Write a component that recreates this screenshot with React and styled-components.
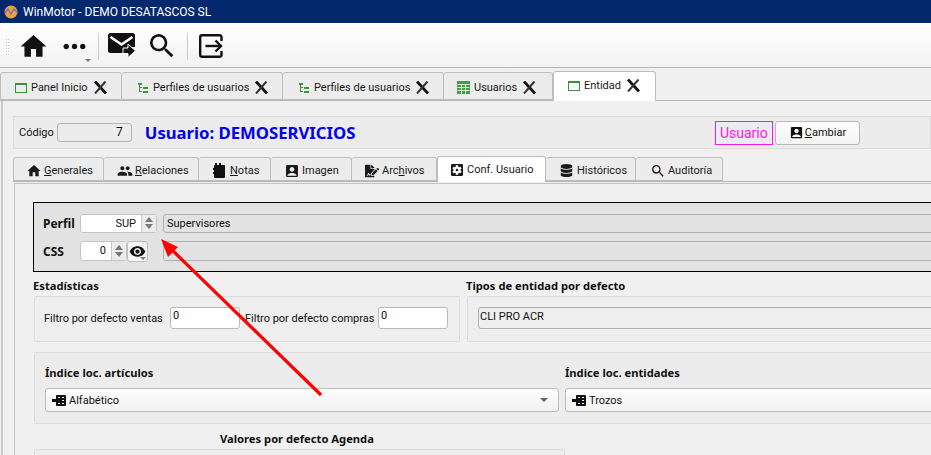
import React from "react"
import styled, { createGlobalStyle } from "styled-components"
import { MdHome, MdPeople, MdAccountBox, MdSearch, MdSettingsApplications, MdVisibility, MdMoreHoriz } from "react-icons/md"
import { FaDatabase, FaFileSignature } from "react-icons/fa"

const Global = createGlobalStyle`
  html, body { margin: 0; padding: 0; background: #f0f0f0; }
  body { font-family: Roboto, "Noto Sans", sans-serif; font-size: 11px; color: #111; }
`
const Window = styled.div`
  position: relative;
  width: 931px;
  height: 455px;
  overflow: hidden;
  background: #f0f0f0;
`
const TitleBar = styled.div`
  height: 23px;
  background: #03286e;
  color: #fff;
  display: flex;
  align-items: center;
  gap: 5px;
  padding-left: 4px;
  font-size: 12px;
`
const Toolbar = styled.div`
  height: 45px;
  box-sizing: border-box;
  border-bottom: 1px solid #b8b8b8;
  background: linear-gradient(#ffffff, #f2f2f2);
  display: flex;
  align-items: center;
  padding: 2px 0 0 5px;
`
const Grip = styled.div`
  width: 5px;
  height: 17px;
  margin-right: 9px;
  background-image: radial-gradient(#bbb 0.7px, transparent 0.8px);
  background-size: 2.5px 3px;
`
const ToolButton = styled.div`
  width: ${p => p.$w}px;
  height: 32px;
  flex: none;
  display: flex;
  align-items: center;
  justify-content: center;
  position: relative;
  margin-right: ${p => p.$mr || 0}px;
  svg { flex: none; }
`
const Caret = styled.span`
  position: absolute;
  right: ${p => p.$r || 0}px;
  bottom: ${p => p.$b || 0}px;
  border: 3px solid transparent;
  border-top: 3px solid #777;
  border-bottom: 0;
`
const ToolSep = styled.div`
  width: 1px;
  height: 27px;
  background: #ccc;
  margin: 0 ${p => p.$mr}px 0 ${p => p.$ml}px;
`
const TabBar = styled.div`
  display: flex;
  align-items: flex-end;
  height: ${p => p.$h}px;
  border-bottom: 1px solid #b5b5b5;
`
const Tab = styled.div`
  box-sizing: border-box;
  width: ${p => p.$w}px;
  height: ${p => (p.$active ? p.$h + 2 : p.$h)}px;
  margin-bottom: ${p => (p.$active ? -1 : 0)}px;
  background: ${p => (p.$active ? "#fff" : "#ececec")};
  border: 1px solid #bdbdbd;
  border-bottom: ${p => (p.$active ? "none" : "1px solid #bdbdbd")};
  border-left: ${p => (p.$first || p.$active ? "1px solid #bdbdbd" : "none")};
  border-radius: 3px 3px 0 0;
  display: flex;
  align-items: center;
  gap: 4px;
  padding-left: ${p => p.$pl}px;
  padding-top: ${p => (p.$active ? 0 : 3)}px;
  padding-bottom: ${p => (p.$active ? p.$ab : 0)}px;
  white-space: nowrap;
  color: #1a1a1a;
`
const TabIcon = styled.span`
  width: 13px;
  flex: none;
  display: flex;
  align-items: center;
  justify-content: center;
  svg { flex: none; }
`
const CloseBox = styled.span`
  display: flex;
  margin-left: 2px;
`
const Key = styled.span`
  text-decoration: underline;
`
const Page = styled.div`
  padding: 15px 0 0 10px;
  border-left: 2px solid #c9c9c9;
  margin-left: 1px;
  width: 1100px;
`
const Header = styled.div`
  height: 33px;
  box-sizing: border-box;
  border: 1px solid #dcdcdc;
  background: #ececec;
  display: flex;
  align-items: center;
  padding-left: 5px;
  width: 918px;
`
const Plain = styled.span`
  font-size: 11px;
  white-space: nowrap;
  width: ${p => (p.$w ? `${p.$w}px` : "auto")};
`
const ReadOnly = styled.div`
  width: 75px;
  height: 19px;
  box-sizing: border-box;
  margin-left: 3px;
  border: 1px solid #b4b4b4;
  border-radius: 3px;
  background: #ececec;
  text-align: right;
  padding-right: 8px;
  line-height: 17px;
  font-size: 12px;
`
const Title = styled.div`
  color: #0000f0;
  font-family: "Noto Sans", sans-serif;
  font-weight: bold;
  font-size: 16.7px;
  margin-left: 13px;
  width: 570px;
  white-space: nowrap;
`
const Badge = styled.div`
  box-sizing: border-box;
  width: 58px;
  height: 24px;
  border: 1px solid #ff14f0;
  color: #ff14f0;
  font-size: 14px;
  display: flex;
  align-items: center;
  justify-content: center;
`
const Button = styled.div`
  box-sizing: border-box;
  width: 85px;
  height: 24px;
  margin-left: 2px;
  border: 1px solid #b9b9b9;
  border-radius: 3px;
  background: linear-gradient(#fdfdfd, #f3f3f3);
  display: flex;
  align-items: center;
  gap: 1px;
  padding-left: 13px;
`
const SubTabs = styled.div`
  margin-top: 7px;
`
const Pane = styled.div`
  border-left: 1px solid #c4c4c4;
  border-top: 1px solid #c4c4c4;
  margin-top: 1px;
  margin-left: 1px;
  padding: 18px 0 0 18px;
  height: 300px;
`
const ProfileBox = styled.div`
  box-sizing: border-box;
  height: 70px;
  border: 1px solid #000;
  background: #e2e2e2;
  padding: 10px 0 0 9px;
  display: flex;
  flex-direction: column;
  gap: 8px;
`
const ProfileRow = styled.div`
  display: flex;
  align-items: center;
  height: 20px;
`
const ProfileLabel = styled.div`
  width: 37px;
  font-family: "Noto Sans", sans-serif;
  font-weight: bold;
  font-size: 12px;
`
const Spin = styled.div`
  box-sizing: border-box;
  width: ${p => p.$w}px;
  height: ${p => p.$h || 19}px;
  display: flex;
  border: 1px solid #c4c4c4;
  border-radius: 3px;
  background: #fff;
`
const SpinValue = styled.div`
  flex: 1;
  text-align: right;
  padding-right: 5px;
  line-height: 18px;
  font-size: 11px;
`
const SpinArrows = styled.div`
  width: 14px;
  background: #ececec;
  border-left: 1px solid #c9c9c9;
  display: flex;
  flex-direction: column;
  align-items: center;
  justify-content: center;
  gap: 2px;
`
const Up = styled.span`
  border: 4px solid transparent;
  border-top: 0;
  border-bottom: 5px solid #777;
`
const Down = styled.span`
  border: 4px solid transparent;
  border-bottom: 0;
  border-top: 5px solid #777;
`
const EyeButton = styled.div`
  box-sizing: border-box;
  width: 21px;
  height: 21px;
  border: 1px solid #bdbdbd;
  border-radius: 3px;
  background: #f4f4f4;
  display: flex;
  align-items: center;
  justify-content: center;
  position: relative;
`
const GreyField = styled.div`
  box-sizing: border-box;
  width: 800px;
  height: ${p => p.$h || 19}px;
  margin-left: ${p => p.$ml}px;
  border: 1px solid #b0b0b0;
  border-radius: 3px;
  background: #e2e2e2;
  padding-left: 3px;
  line-height: 17px;
`
const TwoCols = styled.div`
  display: grid;
  grid-template-columns: 427px 600px;
  column-gap: 6px;
  margin-top: 8px;
`
const GroupTitle = styled.div`
  font-family: "Noto Sans", sans-serif;
  font-weight: bold;
  font-size: 11.2px;
  height: 16px;
  line-height: 12px;
  margin-left: ${p => p.$ml || 0}px;
  white-space: nowrap;
`
const Group = styled.div`
  box-sizing: border-box;
  height: ${p => p.$h}px;
  width: ${p => p.$w || "auto"};
  margin-left: 1px;
  border: 1px solid #dcdcdc;
  border-radius: 2px;
  background: #eeeeee;
`
const FilterGroup = styled(Group)`
  display: flex;
  align-items: center;
  padding: 0 0 2px 9px;
`
const NumInput = styled.div`
  box-sizing: border-box;
  width: 70px;
  height: 22px;
  margin-right: 5px;
  border: 1px solid #b9b9b9;
  border-radius: 3px;
  background: #fff;
  padding: 0 2px;
  line-height: 15px;
`
const TypesGroup = styled(Group)`
  padding: 10px 0 0 10px;
`
const TypesField = styled.div`
  box-sizing: border-box;
  height: 22px;
  width: 560px;
  border: 1px solid #b0b0b0;
  border-radius: 3px;
  background: #eeeeee;
  padding-left: 1px;
  line-height: 17px;
`
const IndexGroup = styled(Group)`
  margin-top: 10px;
  display: grid;
  grid-template-columns: 514px 520px;
  column-gap: 6px;
  padding: 12px 0 0 10px;
  background: #ececec;
`
const ComboTitle = styled(GroupTitle)`
  height: 23px;
  line-height: 16px;
`
const Combo = styled.div`
  box-sizing: border-box;
  height: 24px;
  border: 1px solid #bdbdbd;
  border-radius: 3px;
  background: linear-gradient(#fdfdfd, #f1f1f1);
  display: flex;
  align-items: center;
  gap: 3px;
  padding: 0 10px 0 6px;
`
const ComboCaret = styled.span`
  margin-left: auto;
  border: 4px solid transparent;
  border-bottom: 0;
  border-top: 4px solid #666;
`
const AgendaTitle = styled(GroupTitle)`
  margin: 8px 0 0 187px;
  height: 17px;
  line-height: 14px;
`
const Overlay = styled.svg`
  position: absolute;
  left: 0;
  top: 0;
  pointer-events: none;
`

const Logo = () => (
  <svg width="14" height="14" viewBox="0 0 14 14">
    <circle cx="7" cy="7" r="6.5" fill="#e8a33a" />
    <path d="M1 8 L4 4 L7 9 L10 4 L13 7" fill="none" stroke="#7a6bc0" strokeWidth="1.3" />
  </svg>
)
const MailIcon = () => (
  <svg width="28" height="26" viewBox="0 0 28 26">
    <path d="M2.5 0 H24.5 a2.5 2.5 0 0 1 2.5 2.5 V14 H19 V20 H2.5 a2.5 2.5 0 0 1 -2.5 -2.5 V2.5 a2.5 2.5 0 0 1 2.5 -2.5 Z" fill="#111" />
    <path d="M2.5 4 L13.5 11.5 L24.5 4" fill="none" stroke="#fff" strokeWidth="2.6" />
    <path d="M15 15 H20 V11 L27.5 17.8 L20 24.5 V20.5 H15 Z" fill="#111" stroke="#fff" strokeWidth="1" />
  </svg>
)
const ExitIcon = () => (
  <svg width="24" height="24" viewBox="0 0 24 24" fill="none" stroke="#111" strokeWidth="2.4">
    <path d="M22.5 7 V3 a1.8 1.8 0 0 0 -1.8 -1.8 H3 a1.8 1.8 0 0 0 -1.8 1.8 V21 a1.8 1.8 0 0 0 1.8 1.8 H20.7 a1.8 1.8 0 0 0 1.8 -1.8 V17" />
    <path d="M6.5 12 H22" />
    <path d="M16.5 6.5 L22 12 L16.5 17.5" />
  </svg>
)
const Cross = () => (
  <svg width="13" height="13" viewBox="0 0 13 13">
    <path d="M1 0.5 L12 12.5" stroke="#111" strokeWidth="2.8" />
    <path d="M11.5 0.5 L1 12.5" stroke="#333" strokeWidth="2" />
  </svg>
)
const WindowIcon = () => (
  <svg width="12" height="12" viewBox="0 0 12 12" fill="none" stroke="#3c8f3c">
    <rect x="0.5" y="1.5" width="11" height="9" />
    <path d="M0.5 2.5 H11.5" />
  </svg>
)
const TreeIcon = () => (
  <svg width="12" height="12" viewBox="0 0 12 12" fill="#3c9a3c">
    <rect x="1" y="1" width="4" height="2" />
    <rect x="2" y="3" width="1" height="7" />
    <rect x="3" y="5" width="2" height="1" />
    <rect x="3" y="9" width="2" height="1" />
    <rect x="6" y="5" width="5" height="2" />
    <rect x="6" y="9" width="5" height="2" />
  </svg>
)
const GridIcon = () => (
  <svg width="13" height="13" viewBox="0 0 13 13">
    <rect x="0" y="0" width="13" height="13" fill="#4c9a4c" />
    <path d="M0.5 3.5 H12.5 M0.5 6.5 H12.5 M0.5 9.5 H12.5 M4.5 3 V13 M8.5 3 V13" stroke="#d6ecd6" />
  </svg>
)
const NotebookIcon = () => (
  <svg width="13" height="15" viewBox="0 0 13 15" fill="#111">
    <rect x="1" y="2" width="11" height="13" rx="1" />
    <rect x="2" y="0" width="2" height="4" />
    <rect x="6" y="0" width="2" height="4" />
    <rect x="0" y="5" width="1.5" height="2" />
    <rect x="0" y="9" width="1.5" height="2" />
  </svg>
)
const NodeIcon = () => (
  <svg width="14" height="11" viewBox="0 0 14 11">
    <rect x="4" y="0" width="10" height="11" rx="1" fill="#111" />
    <rect x="0" y="4" width="6" height="3" fill="#111" />
    <path d="M6 2.5 H8 M10 2.5 H12 M10 5.5 H12 M6 8.5 H8 M10 8.5 H12" stroke="#fff" />
  </svg>
)

const topTabs = [
  { label: "Panel Inicio", w: 122, icon: <WindowIcon />, pl: 13 },
  { label: "Perfiles de usuarios", w: 161, icon: <TreeIcon />, pl: 14 },
  { label: "Perfiles de usuarios", w: 161, icon: <TreeIcon />, pl: 14 },
  { label: "Usuarios", w: 109, icon: <GridIcon />, pl: 13 },
  { label: "Entidad", w: 103, icon: <WindowIcon />, pl: 13, active: true },
]
const subTabs = [
  { pre: "", key_: "G", post: "enerales", w: 91, pl: 13, icon: <MdHome size={16} /> },
  { pre: "", key_: "R", post: "elaciones", w: 95, pl: 14, icon: <MdPeople size={16} /> },
  { pre: "", key_: "N", post: "otas", w: 72, pl: 14, icon: <NotebookIcon /> },
  { pre: "Imagen", key_: "", post: "", w: 81, pl: 14, icon: <MdAccountBox size={16} /> },
  { pre: "Arc", key_: "h", post: "ivos", w: 85, pl: 13, icon: <FaFileSignature size={14} /> },
  { pre: "Conf. Usuario", key_: "", post: "", w: 109, pl: 12, icon: <MdSettingsApplications size={16} />, active: true },
  { pre: "Históricos", key_: "", post: "", w: 90, pl: 14, icon: <FaDatabase size={13} /> },
  { pre: "Auditoría", key_: "", post: "", w: 87, pl: 15, icon: <MdSearch size={16} /> },
]

const App = () => {
  return (
    <Window>
      <Global />
      <TitleBar><Logo />WinMotor - DEMO DESATASCOS SL</TitleBar>
      <Toolbar>
        <Grip />
        <ToolButton $w={28} $mr={7}><MdHome size={31} /></ToolButton>
        <ToolButton $w={40}><MdMoreHoriz size={33} /><Caret $r={3} /></ToolButton>
        <ToolSep $ml={4} $mr={9} />
        <ToolButton $w={27} $mr={15}><MailIcon /></ToolButton>
        <ToolButton $w={24}><MdSearch size={32} /></ToolButton>
        <ToolSep $ml={13} $mr={11} />
        <ToolButton $w={24}><ExitIcon /></ToolButton>
      </Toolbar>
      <TabBar $h={32}>
        {topTabs.map((t, i) => (
          <Tab key={i} $w={t.w} $h={28} $pl={t.pl} $ab={2} $active={t.active} $first={i === 0}>
            <TabIcon>{t.icon}</TabIcon>{t.label}<CloseBox><Cross /></CloseBox>
          </Tab>
        ))}
      </TabBar>
      <Page>
        <Header>
          <Plain>Código</Plain>
          <ReadOnly>7</ReadOnly>
          <Title>Usuario: DEMOSERVICIOS</Title>
          <Badge>Usuario</Badge>
          <Button><MdAccountBox size={15} /><span><Key>C</Key>ambiar</span></Button>
        </Header>
        <SubTabs>
          <TabBar $h={25}>
            {subTabs.map((t, i) => (
              <Tab key={i} $w={t.w} $h={24} $pl={t.pl} $ab={0} $active={t.active} $first={i === 0}>
                <TabIcon>{t.icon}</TabIcon><span>{t.pre}{t.key_ && <Key>{t.key_}</Key>}{t.post}</span>
              </Tab>
            ))}
          </TabBar>
        </SubTabs>
        <Pane>
          <ProfileBox>
            <ProfileRow>
              <ProfileLabel>Perfil</ProfileLabel>
              <Spin $w={77}><SpinValue>SUP</SpinValue><SpinArrows><Up /><Down /></SpinArrows></Spin>
              <GreyField $ml={6}>Supervisores</GreyField>
            </ProfileRow>
            <ProfileRow>
              <ProfileLabel>CSS</ProfileLabel>
              <Spin $w={47} $h={20}><SpinValue>0</SpinValue><SpinArrows><Up /><Down /></SpinArrows></Spin>
              <EyeButton><MdVisibility size={17} /><Caret $r={1} $b={1} /></EyeButton>
              <GreyField $ml={15} $h={20} />
            </ProfileRow>
          </ProfileBox>
          <TwoCols>
            <div>
              <GroupTitle>Estadísticas</GroupTitle>
              <FilterGroup $h={46}>
                <Plain $w={126}>Filtro por defecto ventas</Plain>
                <NumInput>0</NumInput>
                <Plain $w={133}>Filtro por defecto compras</Plain>
                <NumInput>0</NumInput>
              </FilterGroup>
            </div>
            <div>
              <GroupTitle>Tipos de entidad por defecto</GroupTitle>
              <TypesGroup $h={46}>
                <TypesField>CLI PRO ACR</TypesField>
              </TypesGroup>
            </div>
          </TwoCols>
          <IndexGroup $h={72}>
            <div>
              <ComboTitle>Índice loc. artículos</ComboTitle>
              <Combo><NodeIcon />Alfabético<ComboCaret /></Combo>
            </div>
            <div>
              <ComboTitle>Índice loc. entidades</ComboTitle>
              <Combo><NodeIcon />Trozos</Combo>
            </div>
          </IndexGroup>
          <AgendaTitle>Valores por defecto Agenda</AgendaTitle>
          <Group $h={40} $w="531px" />
        </Pane>
      </Page>
      <Overlay width="931" height="455" viewBox="0 0 931 455">
        <path d="M321 395 L171 249" stroke="#f00" strokeWidth="3.2" fill="none" />
        <path d="M161 239 L178 247 L168 257 Z" fill="#f00" />
      </Overlay>
    </Window>
  )
}
export default App
